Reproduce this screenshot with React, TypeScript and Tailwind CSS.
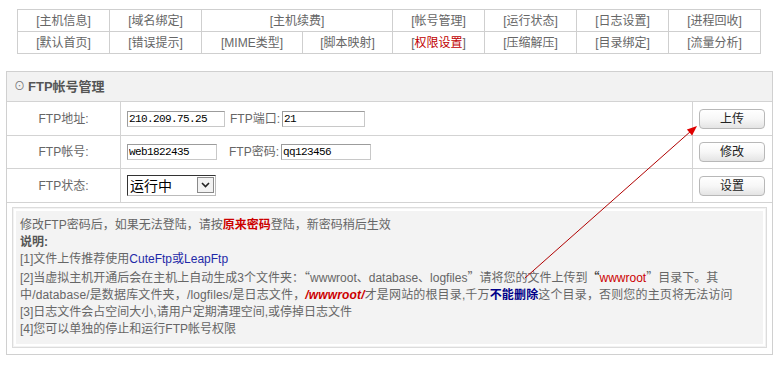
import React from "react";

const font = "font-['Liberation_Sans','Noto_Sans_CJK_SC',sans-serif]";
const cjk = "font-['Noto_Sans_CJK_SC',sans-serif]";

type NavCell = { label: string; w: string; red?: boolean };

const navTop: NavCell[] = [
  { label: "[主机信息]", w: "w-[92px]" },
  { label: "[域名绑定]", w: "w-[92px]" },
  { label: "[主机续费]", w: "w-[191px]" },
  { label: "[帐号管理]", w: "w-[92px]" },
  { label: "[运行状态]", w: "w-[92px]" },
  { label: "[日志设置]", w: "w-[92px]" },
  { label: "[进程回收]", w: "w-[92px]" },
];

const navBottom: NavCell[] = [
  { label: "[默认首页]", w: "w-[92px]" },
  { label: "[错误提示]", w: "w-[92px]" },
  { label: "[MIME类型]", w: "w-[101px]" },
  { label: "[脚本映射]", w: "w-[90px]" },
  { label: "[权限设置]", w: "w-[92px]", red: true },
  { label: "[压缩解压]", w: "w-[92px]" },
  { label: "[目录绑定]", w: "w-[92px]" },
  { label: "[流量分析]", w: "w-[92px]" },
];

function NavRow({ cells }: { cells: NavCell[] }) {
  return (
    <div className="flex h-[22px]">
      {cells.map((c) => (
        <div
          key={c.label}
          className={`${c.w} flex items-center justify-center border-r border-b border-[#cfcfcf] text-[12px] leading-none ${
            c.red ? "text-[#c00000]" : "text-[#666]"
          }`}
        >
          {c.red ? (
            <>
              <span className="text-[#666]">[</span>权限设置<span className="text-[#666]">]</span>
            </>
          ) : (
            c.label
          )}
        </div>
      ))}
    </div>
  );
}

function Btn({ children }: { children: React.ReactNode }) {
  return (
    <button className="flex h-[20px] w-[66px] items-center justify-center rounded-[4px] border border-[#b8b8b8] bg-gradient-to-b from-white via-[#f7f7f7] to-[#e4e4e4] text-[12px] leading-none text-[#222]">
      {children}
    </button>
  );
}

function TextBox({ value, w }: { value: string; w: string }) {
  return (
    <input
      readOnly
      value={value}
      className={`${w} h-[16px] border border-[#9c9c9c] border-b-[#c8c8c8] border-r-[#c8c8c8] bg-white px-[1px] font-['Liberation_Mono',monospace] text-[11px] leading-none tracking-[-0.6px] text-black outline-none`}
    />
  );
}

function Row({
  label,
  h,
  children,
  button,
}: {
  label: string;
  h: string;
  children: React.ReactNode;
  button: string;
}) {
  return (
    <div className={`flex ${h} border-b border-[#d3d3d3]`}>
      <div className="flex w-[114px] items-center justify-center border-r border-[#d3d3d3] text-[12px] text-[#666]">
        {label}
      </div>
      <div className="flex flex-1 items-center pl-[6px] text-[12px] text-[#666]">{children}</div>
      <div className="flex w-[80px] items-center border-l border-[#d3d3d3] pl-[6px]">
        <Btn>{button}</Btn>
      </div>
    </div>
  );
}

export default function App() {
  return (
    <div className={`relative h-[371px] w-[782px] overflow-hidden bg-white ${font}`}>
      {/* top nav */}
      <div className="ml-[17px] mt-[9px] w-[744px] border-l border-t border-[#cfcfcf]">
        <NavRow cells={navTop} />
        <NavRow cells={navBottom} />
      </div>

      {/* ftp panel */}
      <div className="ml-[6px] mt-[17px] w-[767px] border border-[#d0d0d0]">
        <div className="flex h-[30px] items-center border-b border-[#d3d3d3] bg-[#f2f2f2] pl-[7px] text-[13px] font-bold text-[#555]">
          <span className="mr-[3px] text-[11px] font-normal text-[#777]">⊙</span>
          FTP帐号管理
        </div>

        <Row label="FTP地址:" h="h-[34px]" button="上传">
          <TextBox value="210.209.75.25" w="w-[98px]" />
          <span className="ml-[5px] mr-[2px]">FTP端口:</span>
          <TextBox value="21" w="w-[83px]" />
        </Row>
        <Row label="FTP帐号:" h="h-[33px]" button="修改">
          <TextBox value="web1822435" w="w-[90px]" />
          <span className="ml-[12px] mr-[2px]">FTP密码:</span>
          <TextBox value="qq123456" w="w-[90px]" />
        </Row>
        <Row label="FTP状态:" h="h-[34px]" button="设置">
          <div className="relative h-[21px] w-[89px]">
            <select className="h-full w-full appearance-none border border-[#333] border-b-[#bbb] border-r-[#bbb] bg-white pl-[2px] text-[14px] leading-none text-black outline-none">
              <option>运行中</option>
              <option>已停止</option>
            </select>
            <div className="pointer-events-none absolute right-[2px] top-[2px] flex h-[16px] w-[17px] items-center justify-center border border-[#8a8a8a] bg-[#f2f2f2]">
              <svg width="9" height="6" viewBox="0 0 9 6">
                <path d="M1 1 L4.5 4.5 L8 1" fill="none" stroke="#222" strokeWidth="1.6" />
              </svg>
            </div>
          </div>
        </Row>

        <div className="px-[5px] pb-[6px] pt-[4px]">
          <div className="border border-[#dcdcdc] bg-[#f3f3f3] p-[1px]">
            <div className="border-2 border-white bg-[#f3f3f3] px-[4px] pb-[6px] pt-[6px] text-[12px] leading-[17px] text-[#666]">
              <div className="whitespace-nowrap">
                修改FTP密码后，如果无法登陆，请按<b className="text-[#cc0000]">原来密码</b>登陆，新密码稍后生效
              </div>
              <div className="font-bold text-[#555]">说明:</div>
              <div className="whitespace-nowrap">
                [1]文件上传推荐使用<span className="text-[#1f2aa8]">CuteFtp或LeapFtp</span>
              </div>
              <div className="whitespace-nowrap">
                [2]当虚拟主机开通后会在主机上自动生成3个文件夹：<span className={cjk}>“</span>wwwroot、database、logfiles
                <span className={cjk}>”</span>请将您的文件上传到
                <b className={`${cjk} text-[#444]`}>“</b>
                <span className="text-[#cc0000]">wwwroot</span>
                <span className={cjk}>”</span>目录下。其
              </div>
              <div className="whitespace-nowrap tracking-[0.15px]">
                中/database/是数据库文件夹，/logfiles/是日志文件，
                <b className="italic text-[#cc0000]">/wwwroot/</b>才是网站的根目录,千万
                <b className="text-[#000088]">不能删除</b>这个目录，否则您的主页将无法访问
              </div>
              <div className="whitespace-nowrap">[3]日志文件会占空间大小,请用户定期清理空间,或停掉日志文件</div>
              <div className="whitespace-nowrap">[4]您可以单独的停止和运行FTP帐号权限</div>
            </div>
          </div>
        </div>
      </div>

      {/* next panel */}
      <div className="ml-[6px] mt-[16px] h-[20px] w-[767px] border border-[#d0d0d0] bg-[#fafafa]" />

      {/* red annotation arrow */}
      <svg className="pointer-events-none absolute left-0 top-0" width="782" height="371">
        <line x1="525" y1="278" x2="691" y2="131" stroke="#b00000" strokeWidth="1" />
        <polygon points="697,126 692.1,135.6 686.9,129.6" fill="#e00000" />
      </svg>
    </div>
  );
}
